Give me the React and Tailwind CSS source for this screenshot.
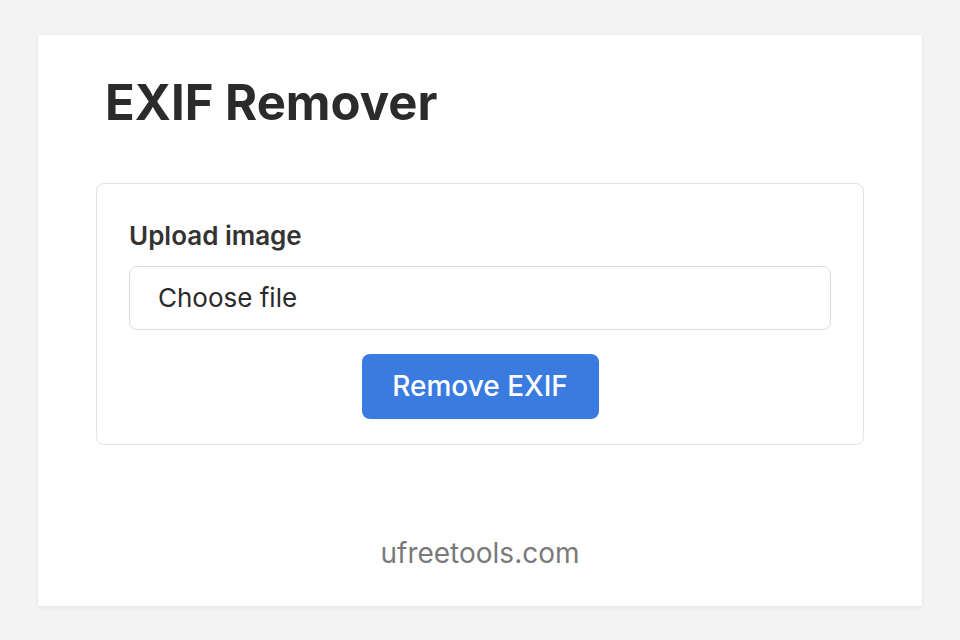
export default function App() {
  return (
    <div
      className="flex min-h-screen items-center justify-center bg-[#f3f3f3]"
      style={{ fontFamily: "Inter, 'Noto Sans', sans-serif" }}
    >
      <div className="flex h-[571px] w-[884px] flex-col bg-white px-[58px] pt-[43px] shadow-[0_1px_4px_rgba(0,0,0,0.08)]">
        {/* Title */}
        <h1 className="ml-[9px] text-[49px] font-bold leading-none text-[#2b2b2b]">
          EXIF Remover
        </h1>

        {/* Upload box */}
        <div className="mt-[56px] rounded-lg border border-[#e2e2e2] px-8 pb-[25px] pt-[39px]">
          <label className="block text-[26px] font-semibold leading-none text-[#333]">
            Upload image
          </label>

          <div className="mt-[17px] flex h-16 items-center rounded-lg border border-[#dcdcdc] pl-[28px] text-[26px] text-[#2a2a2a]">
            Choose file
          </div>

          <div className="mt-6 flex justify-center">
            <button className="h-[65px] w-[237px] rounded-lg bg-[#3a7be0] text-[28px] font-medium text-white">
              Remove EXIF
            </button>
          </div>
        </div>

        {/* Footer */}
        <p className="mt-[94px] text-center text-[28px] leading-none text-[#7a7a7a]">
          ufreetools.com
        </p>
      </div>
    </div>
  );
}
